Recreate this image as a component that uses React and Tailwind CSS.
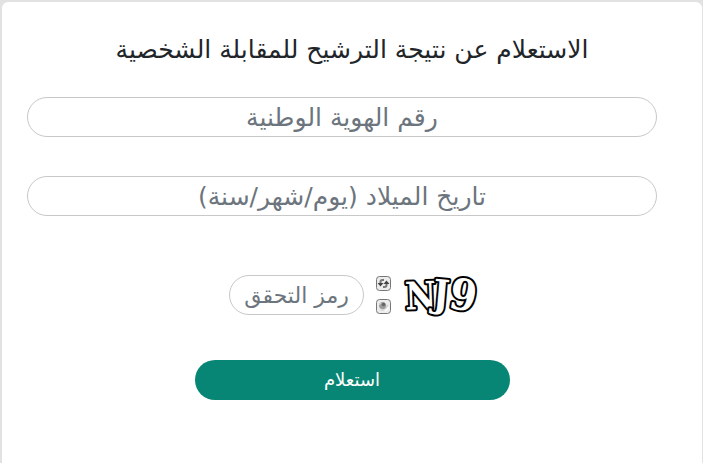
import { useState } from 'react';

const fieldClass =
  'h-10 rounded-[20px] border border-[#c8c8c8] bg-white px-1 text-center leading-9 text-[#495057] placeholder:leading-9 placeholder:overflow-visible placeholder:text-[#6c757d] placeholder:opacity-100 outline-none';

function RefreshIcon() {
  return (
    <svg viewBox="0 0 15 15" className="size-[15px]" aria-hidden="true">
      <rect x="0.5" y="0.5" width="14" height="14" rx="3" fill="#ececec" stroke="#777" />
      <path d="M4.500 8V6A2 2 0 0 1 6.500 4H8" fill="none" stroke="#777" strokeWidth="2" />
      <path d="M10.500 7v2A2 2 0 0 1 8.500 11H7" fill="none" stroke="#777" strokeWidth="2" />
      <path d="M1.500 7h6L4.500 10.500zM7.500 8h6L10.500 4.500z" fill="#444" />
    </svg>
  );
}

function SoundIcon() {
  return (
    <svg viewBox="0 0 15 15" className="size-[15px]" aria-hidden="true">
      <rect x="0.5" y="0.5" width="14" height="14" rx="3" fill="#ececec" stroke="#777" />
      <path d="M4 11l3 1 5-4V5z" fill="#d4d4d4" />
      <circle cx="6.5" cy="6.500" r="3.500" fill="#999" />
      <circle cx="7.500" cy="5.500" r="1.800" fill="#666" />
      <path d="M3.500 6a3 3 0 0 1 2-2" fill="none" stroke="#ddd" />
      <path d="M9 12q3-1 3.500-4" fill="none" stroke="#fff" strokeWidth="1.500" />
    </svg>
  );
}

function Captcha() {
  return (
    <svg
      viewBox="0 0 76 44"
      className="h-11 w-[76px] overflow-visible"
      direction="ltr"
      fontFamily="'DejaVu Serif Condensed', 'DejaVu Serif', serif"
      fontWeight="700"
      fill="#fff"
      stroke="#000"
      strokeWidth="4"
      strokeLinejoin="round"
      paintOrder="stroke"
    >
      <text x="2" y="36" fontSize="38" transform="rotate(-2 16 22)">N</text>
      <text x="30" y="34" fontSize="38" transform="rotate(5 38 22)">J</text>
      <text x="47" y="37" fontSize="43" transform="rotate(10 60 22)">9</text>
    </svg>
  );
}

export default function App() {
  const [form, setForm] = useState({ nationalId: '', birthDate: '', code: '' });

  const handleChange = (e) => setForm({ ...form, [e.target.name]: e.target.value });

  return (
    <div className="min-h-screen bg-[#e2e2e2] pt-0.5 pr-px pl-0.5 font-['DejaVu_Sans',sans-serif]">
      <form
        dir="rtl"
        onSubmit={(e) => e.preventDefault()}
        className="min-h-[calc(100vh-2px)] rounded-t-md bg-white pt-8 pb-16"
      >
        <h1 className="text-center text-[25px] leading-8 text-[#212529]">
          الاستعلام عن نتيجة الترشيح للمقابلة الشخصية
        </h1>

        <div className="mt-[31px] flex flex-col gap-[39px] pr-[45px] pl-[25px]">
          <input
            name="nationalId"
            aria-label="رقم الهوية الوطنية"
            placeholder="رقم الهوية الوطنية"
            value={form.nationalId}
            onChange={handleChange}
            className={`${fieldClass} w-full text-[25px]`}
          />
          <input
            name="birthDate"
            aria-label="تاريخ الميلاد (يوم/شهر/سنة)"
            placeholder="تاريخ الميلاد (يوم/شهر/سنة)"
            value={form.birthDate}
            onChange={handleChange}
            className={`${fieldClass} w-full text-[25px]`}
          />
        </div>

        {/* Captcha */}
        <div className="mt-[57px] flex items-center justify-center gap-3 pl-1">
          <Captcha />
          <div className="flex flex-col gap-2">
            <button type="button" aria-label="تحديث" className="block">
              <RefreshIcon />
            </button>
            <button type="button" aria-label="استماع" className="block">
              <SoundIcon />
            </button>
          </div>
          <input
            name="code"
            aria-label="رمز التحقق"
            placeholder="رمز التحقق"
            value={form.code}
            onChange={handleChange}
            className={`${fieldClass} w-[135px] text-[22px]`}
          />
        </div>

        <button
          type="submit"
          className="mx-auto mt-[43px] block h-10 w-[45%] rounded-[20px] bg-[#078675] text-lg text-white"
        >
          استعلام
        </button>
      </form>
    </div>
  );
}
